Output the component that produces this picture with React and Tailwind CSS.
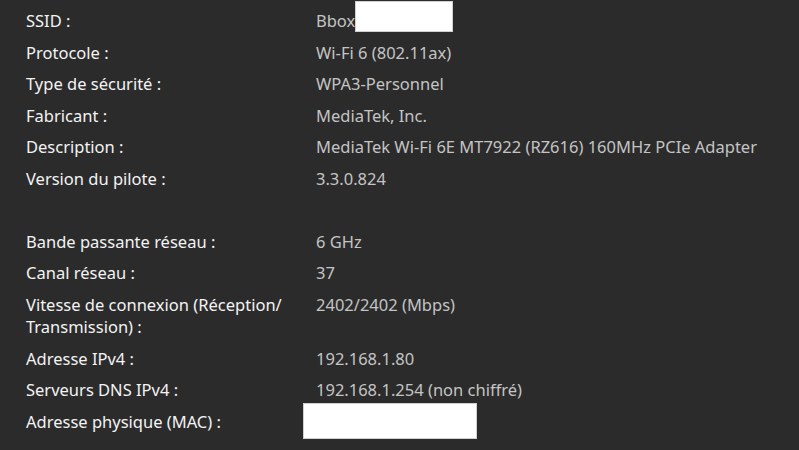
const rows = [
  { label: "SSID :", value: "Bbox", redact: "ssid" },
  { label: "Protocole :", value: "Wi-Fi 6 (802.11ax)" },
  { label: "Type de sécurité :", value: "WPA3-Personnel" },
  { label: "Fabricant :", value: "MediaTek, Inc." },
  { label: "Description :", value: "MediaTek Wi-Fi 6E MT7922 (RZ616) 160MHz PCIe Adapter" },
  { label: "Version du pilote :", value: "3.3.0.824" },
  { spacer: true },
  { label: "Bande passante réseau :", value: "6 GHz" },
  { label: "Canal réseau :", value: "37" },
  { label: ["Vitesse de connexion (Réception/", "Transmission) :"], value: "2402/2402 (Mbps)" },
  { label: "Adresse IPv4 :", value: "192.168.1.80" },
  { label: "Serveurs DNS IPv4 :", value: "192.168.1.254 (non chiffré)" },
  { label: "Adresse physique (MAC) :", value: "", redact: "mac" },
];

export default function App() {
  return (
    <div
      className="w-[799px] h-[450px] overflow-hidden bg-[#2b2b2b] text-[16.5px] leading-[22.5px]"
      style={{ fontFamily: '"Noto Sans", "Open Sans", sans-serif' }}
    >
      <div className="grid grid-cols-[290px_1fr] gap-y-[9px] pl-[26px] pt-[10px]">
        {rows.map((row, i) =>
          row.spacer ? (
            <div key={i} className="col-span-2 h-[22.5px]" />
          ) : (
            <div key={i} className="contents">
              <div className="text-[#f3f3f3]">
                {Array.isArray(row.label)
                  ? row.label.map((l) => <div key={l}>{l}</div>)
                  : row.label}
              </div>
              <div className="text-[#c4c4c4] flex items-start">
                {row.value && <span>{row.value}</span>}
                {row.redact === "ssid" && (
                  <span className="-mt-[9px] h-[31px] w-[98px] bg-white border border-[#d0d0d0]" />
                )}
                {row.redact === "mac" && (
                  <span className="-ml-[13px] -mt-[8px] h-[36px] w-[174px] bg-white border border-[#d0d0d0]" />
                )}
              </div>
            </div>
          )
        )}
      </div>
    </div>
  );
}
